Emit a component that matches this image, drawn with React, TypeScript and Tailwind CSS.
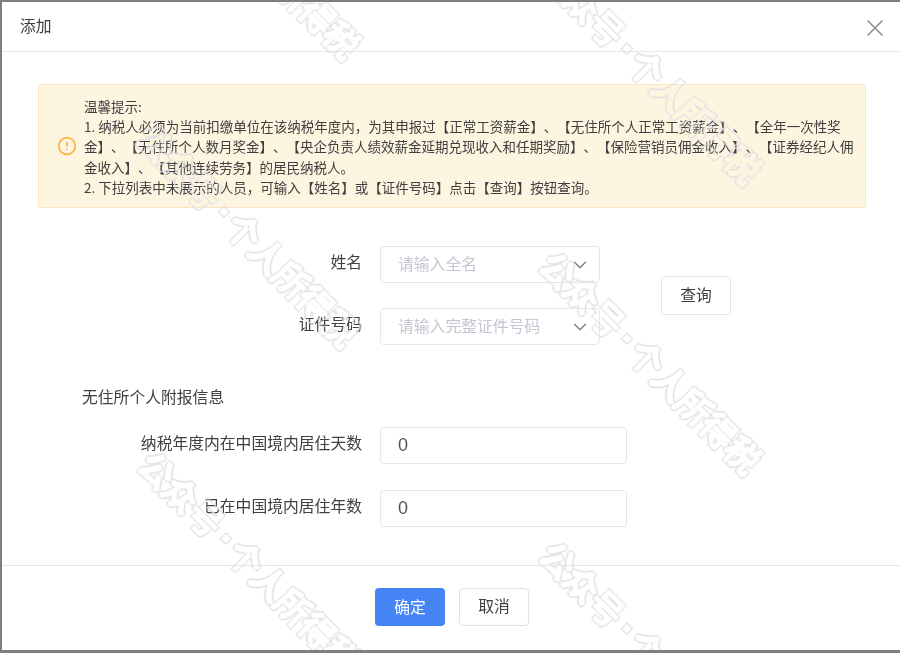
import { ChevronDown, CircleAlert, X } from "lucide-react";

// dot position of each watermark copy
const marks = [
  { x: 224, y: -79 },
  { x: 222, y: 209 },
  { x: 625, y: 46 },
  { x: 625, y: 336 },
  { x: 224, y: 536 },
  { x: 625, y: 626 },
];

const markText =
  "whitespace-nowrap text-[34px] font-medium leading-none text-black px-[6px] py-[6px] [filter:url(#wm-outline)]";

function Watermark({ x, y }: { x: number; y: number }) {
  return (
    <div
      className="absolute w-0 h-0 flex items-center justify-center rotate-45"
      style={{ left: x + 24, top: y + 24 }}
    >
      <div className="flex items-center shrink-0">
        <span className={markText}>公众号</span>
        <span className="mx-[1px] w-[9px] h-[9px] border-[1.5px] border-[#dcdce0] shrink-0" />
        <span className={markText}>个人所得税</span>
      </div>
    </div>
  );
}

function SelectField({ placeholder }: { placeholder: string }) {
  return (
    <div className="w-[220px] h-[37px] flex items-center justify-between pl-[17px] pr-[8px] border border-[#e4e6ef] rounded-[4px] bg-white">
      <span className="text-[#c3c7d1] text-[15.8px] pb-[2px]">{placeholder}</span>
      <ChevronDown size={22} strokeWidth={1.3} className="text-[#777]" />
    </div>
  );
}

function Label({ text }: { text: string }) {
  return <label className="w-[362px] pb-[5px] text-right text-[15.8px] text-[#404040]">{text}</label>;
}

function NumberField() {
  return (
    <div className="w-[247px] h-[37px] flex items-center pl-[17px] border border-[#e4e6ef] rounded-[4px] text-[18px] text-[#555] font-['Liberation_Sans',sans-serif]">
      0
    </div>
  );
}

export default function App() {
  return (
    <div className="relative w-[900px] h-[653px] overflow-hidden bg-white border-t-2 border-b-[3px] border-l-2 border-[#7f7f7f] blur-[0.35px] font-['Noto_Sans_CJK_SC','Microsoft_YaHei',sans-serif] flex flex-col">
      {/* outline filter for the watermark: ring between two dilations of the glyphs */}
      <svg className="absolute w-0 h-0">
        <defs>
          <filter id="wm-outline" x="-5%" y="-20%" width="110%" height="140%" colorInterpolationFilters="sRGB">
            <feMorphology in="SourceAlpha" operator="dilate" radius="2.5" result="outer" />
            <feMorphology in="SourceAlpha" operator="dilate" radius="1.5" result="inner" />
            <feComposite in="outer" in2="inner" operator="out" result="ring" />
            <feColorMatrix in="ring" type="matrix" values="0 0 0 0 0.87  0 0 0 0 0.87  0 0 0 0 0.89  0 0 0 1 0" />
          </filter>
        </defs>
      </svg>

      {/* header */}
      <div className="h-[50px] shrink-0 flex items-center justify-between pl-[18px] pr-[11px] border-b border-[#e8e8ec]">
        <span className="text-[15.8px] text-[#404040] pb-[2px]">添加</span>
        <X size={28} strokeWidth={1.3} className="text-[#8e8e8e] mt-[3px]" />
      </div>

      {/* body */}
      <div className="flex-1 pt-[32px]">
        <div className="ml-[36px] w-[828px] h-[124px] flex items-center gap-[7px] pl-[18px] pr-[11px] bg-[#fef5e1] border border-[#fde3c0] rounded-[3px]">
          <CircleAlert size={20} strokeWidth={2} className="shrink-0 text-[#fbb040]" />
          <p className="text-[13.5px] leading-[20.3px] text-[#404040] [text-spacing-trim:space-all] pt-[1px]">
            温馨提示:
            <br />
            1. 纳税人必须为当前扣缴单位在该纳税年度内，为其申报过【正常工资薪金】、【无住所个人正常工资薪金】、【全年一次性奖金】、【无住所个人数月奖金】、【央企负责人绩效薪金延期兑现收入和任期奖励】、【保险营销员佣金收入】、【证券经纪人佣金收入】、【其他连续劳务】的居民纳税人。
            <br />
            2. 下拉列表中未展示的人员，可输入【姓名】或【证件号码】点击【查询】按钮查询。
          </p>
        </div>

        <div className="mt-[38px] flex items-center">
          <div className="flex flex-col gap-[25px]">
            <div className="flex items-center gap-[18px] -ml-[2px]">
              <Label text="姓名" />
              <SelectField placeholder="请输入全名" />
            </div>
            <div className="flex items-center gap-[18px] -ml-[2px]">
              <Label text="证件号码" />
              <SelectField placeholder="请输入完整证件号码" />
            </div>
          </div>
          <button className="ml-[61px] w-[70px] h-[39px] pb-[1px] text-[15.8px] text-[#404040] border border-[#e4e6ef] rounded-[4px] bg-white">
            查询
          </button>
        </div>

        <div className="mt-[40px] ml-[80px] text-[15.8px] leading-[24px] text-[#404040]">无住所个人附报信息</div>

        <div className="mt-[18px] flex flex-col gap-[26px] -ml-[2px]">
          <div className="flex items-center gap-[18px]">
            <Label text="纳税年度内在中国境内居住天数" />
            <NumberField />
          </div>
          <div className="flex items-center gap-[18px]">
            <Label text="已在中国境内居住年数" />
            <NumberField />
          </div>
        </div>
      </div>

      {/* footer */}
      <div className="h-[85px] shrink-0 flex justify-center items-start gap-[14px] pt-[22px] pl-[2px] border-t border-[#e4e6ef]">
        <button className="w-[70px] h-[38px] pb-[1px] rounded-[4px] bg-[#4584f4] text-[15.8px] text-white">确定</button>
        <button className="w-[70px] h-[38px] pb-[3px] rounded-[4px] border border-[#dfe1e6] bg-white text-[15.8px] text-[#404040]">取消</button>
      </div>

      {/* watermark */}
      <div className="absolute inset-0 pointer-events-none">
        {marks.map((m) => (
          <Watermark key={`${m.x}-${m.y}`} x={m.x} y={m.y} />
        ))}
      </div>
    </div>
  );
}
